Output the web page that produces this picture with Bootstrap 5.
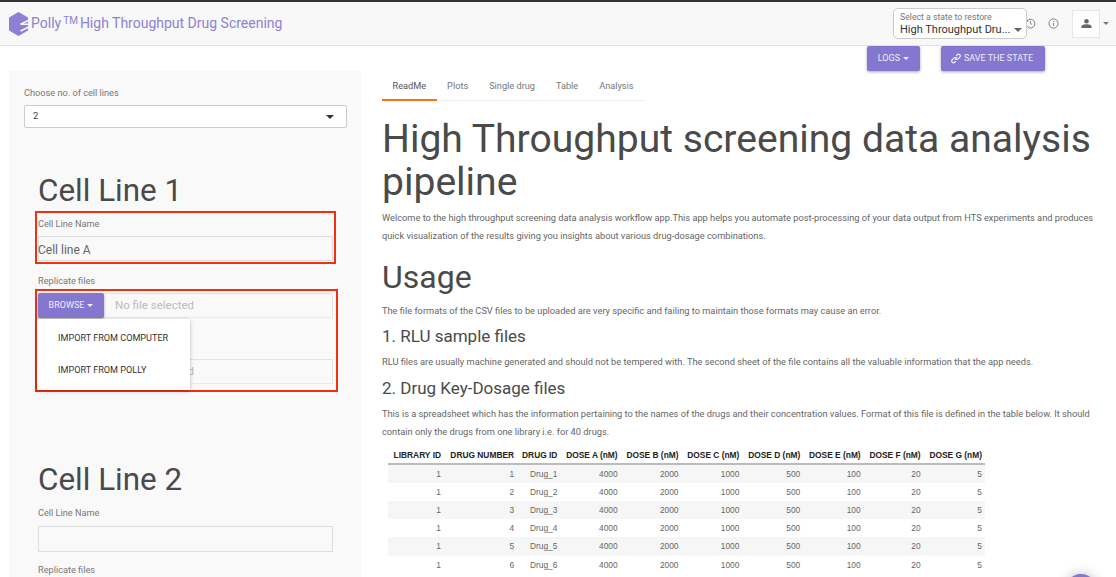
<!DOCTYPE html>
<html lang="en">
<head>
    <meta charset="UTF-8">
    <meta name="viewport" content="width=device-width, initial-scale=1.0">
    <title>Polly High Throughput Drug Screening</title>
    <link href="https://cdn.jsdelivr.net/npm/bootstrap@5.3.0/dist/css/bootstrap.min.css" rel="stylesheet">
    <style>
html, body {
    height: 577px;
    overflow: hidden;
}
body {
    font-family: Roboto, "Liberation Sans", sans-serif;
    font-size: 9.25px;
    color: #666;
    background: #fff;
}

/* Top bar */
.top-bar {
    height: 46px;
    padding: 0 7px 0 9px;
    background: #f8f8f8;
    border-top: 2px solid #333;
    border-bottom: 1px solid #e3e3e3;
    flex-wrap: nowrap;
}
.app-title {
    color: #8d81d6;
    font-size: 14px;
    margin-left: 3px;
}
.app-title sup {
    font-size: 10px;
    top: -.4em;
    margin: 0 2px 0 2px;
}
.state-box {
    width: 134px;
    height: 31px;
    padding: 3px 6px;
    margin-right: -2px;
    background: #fff;
    border: 1px solid #ccc;
    border-radius: 5px;
    position: relative;
}
.state-label {
    font-size: 8.7px;
    line-height: 10px;
    color: #777;
}
.state-value {
    font-size: 11px;
    line-height: 15px;
    color: #333;
    white-space: nowrap;
}
.state-caret {
    position: absolute;
    right: 4px;
    top: 19px;
    border-top: 4px solid #666;
    border-left: 4px solid transparent;
    border-right: 4px solid transparent;
}
.info-icon {
    margin-left: 12px;
}
.user-box {
    width: 28px;
    height: 28px;
    margin-left: 13px;
    background: #fff;
    border: 1px solid #e6e6e6;
}
.user-caret {
    margin-left: 3px;
    border-top: 3px solid #777;
    border-left: 3px solid transparent;
    border-right: 3px solid transparent;
}

/* Buttons */
.btn-polly {
    height: 25px;
    padding: 0 11px;
    font-size: 9px;
    color: #efecfb;
    background: #8577cf;
    border: 0;
    border-radius: 2px;
    box-shadow: 0 1px 3px rgba(0, 0, 0, .35);
}
.btn-polly:hover {
    color: #fff;
    background: #7a6cc6;
}
.dropdown-toggle::after {
    margin-left: 3px;
    vertical-align: 1px;
    border-top-width: 3.5px;
    border-left-width: 3.5px;
    border-right-width: 3.5px;
}
.action-row {
    height: 25px;
    padding-right: 71px;
    gap: 21px;
}
.btn-save {
    width: 104px;
    padding: 0 0 0 10px;
    gap: 3px;
}

/* Side panel */
.page-body {
    height: 506px;
}
.side-panel {
    width: 352px;
    margin-left: 9px;
    padding: 16px 14px 0 15px;
    background: #f9f9f9;
    overflow: hidden;
    flex: none;
}
.field-label {
    display: block;
    font-size: 9.2px;
    line-height: 12px;
    color: #777;
}
.count-select {
    height: 23px;
    margin-top: 6px;
    padding: 0 8px;
    font-size: 9.5px;
    color: #444;
    background: #fff;
    border: 1px solid #ccc;
    border-radius: 2px;
}
.count-caret {
    border-top: 4px solid #333;
    border-left: 4px solid transparent;
    border-right: 4px solid transparent;
}
.line-block {
    padding-left: 14px;
    padding-right: 14px;
}
.line-title {
    font-size: 31.4px;
    font-weight: 400;
    line-height: 38px;
    margin: 44px 0 1px;
    color: #4a4a4a;
}
.line-second {
    margin: 69px 0 8px;
}
.text-box {
    height: 25px;
    background: #f9f9f9;
    border: 1.5px solid #ddd;
    border-radius: 0;
    font-size: 12px;
    color: #666;
    padding: 0;
    line-height: 26px;
    text-indent: -1px;
}
.text-box-tall {
    height: 26px;
    margin-top: 7px;
}
.red-one {
    margin: 0 -3px;
    padding: 5px 1px 0;
    height: 53px;
    border: 2px solid #f03013;
}
.red-one .text-box {
    margin-top: 6px;
}
.replicate-label {
    margin: 11px 0 0;
}
.replicate-label-low {
    margin-top: 12px;
}
.red-two {
    margin: 2px -5px 0 -3px;
    padding: 2px 3px 0 1px;
    height: 103px;
    border: 2px solid #f03013;
    position: relative;
}
.file-row {
    height: 25px;
}
.btn-browse {
    width: 66px;
    flex: none;
    height: 25px;
    padding: 1px 0 0;
}
.file-name {
    flex: 1;
    height: 25px;
    padding-left: 11px;
    font-size: 11.5px;
    line-height: 23px;
    color: #bbb;
    border: 1.5px solid #e3e3e3;
    border-left: 0;
    border-bottom: 1px dotted #ddd;
}
.second-file {
    margin-top: 41px;
}
.import-menu {
    display: block;
    left: 0;
    top: 28px;
    width: 153px;
    min-width: 0;
    height: 71px;
    padding: 3px 0 0;
    border: 0;
    border-radius: 0;
    background: #fff;
    box-shadow: 0 1px 4px rgba(0, 0, 0, .25);
}
.import-menu .dropdown-item {
    height: 32px;
    padding: 0 0 0 21px;
    line-height: 32px;
    font-size: 9.1px;
    color: #333;
}

/* Main column */
.main-col {
    flex: 1;
    padding: 7px 18px 0 21px;
    min-width: 0;
    overflow: hidden;
}
.tab-strip {
    width: 262px;
    height: 23px;
    border-bottom: 1px solid #eee;
    flex-wrap: nowrap;
}
.tab-strip .nav-link {
    height: 23px;
    padding: 1px 10.5px 0;
    font-size: 9.2px;
    color: #777;
    white-space: nowrap;
    border-bottom: 2px solid transparent;
}
.tab-strip .nav-link.active {
    color: #555;
    border-bottom-color: #f57313;
}
.doc-title {
    font-size: 39.1px;
    line-height: 43px;
    font-weight: 400;
    color: #4a4a4a;
    margin: 17px 0 5px;
}
.doc-text {
    font-size: 9.25px;
    line-height: 18px;
    margin: 0;
    color: #666;
}
.doc-usage {
    font-size: 32px;
    line-height: 36px;
    font-weight: 400;
    color: #4a4a4a;
    margin: 14px 0 7px;
}
.doc-sub {
    font-size: 17px;
    line-height: 20px;
    font-weight: 400;
    color: #4a4a4a;
    margin: 6px 0 7px;
}
.doc-sub-last {
    margin: 7px 0 7px;
}
.doc-last {
    line-height: 17.500px;
}

/* Key table */
.key-table {
    width: 597px;
    margin: 7.500px 0 0 6px;
    font-family: "Liberation Sans", Arial, sans-serif;
    font-size: 8.4px;
    --bs-table-striped-bg: #f6f6f6;
    --bs-table-striped-color: #666;
}
.key-table th,
.key-table td {
    padding: 0 3px;
    height: 18.3px;
    line-height: 18px;
    text-align: right;
    white-space: nowrap;
    border: 0;
    color: #666;
}
.key-table th {
    height: 16px;
    line-height: 15px;
    color: #222;
    border-bottom: 2px solid #bbb;
}
.fab-peek {
    position: absolute;
    left: 1065px;
    top: 574px;
    width: 32px;
    height: 32px;
    border-radius: 50%;
    background: #8577cf;
    box-shadow: 0 0 12px rgba(0, 0, 0, .25);
}
    </style>
</head>
<body>
<nav class="navbar top-bar d-flex align-items-center">
    <div class="d-flex align-items-center flex-grow-1">
        <svg width="19" height="24" viewBox="0 0 19 24">
            <path fill="#8d81d6" stroke="#8d81d6" stroke-width="2" stroke-linejoin="round" d="M9.500 1 18 6v12l-8.500 5L1 18V6z"/>
            <path fill="none" stroke="#f8f8f8" stroke-width="1.600" d="M20 8.200 11.500 12.200H20M20 15 11.500 19"/>
        </svg>
        <span class="app-title">Polly<sup>TM</sup>High Throughput Drug Screening</span>
    </div>
    <div class="state-box">
        <div class="state-label">Select a state to restore</div>
        <div class="state-value">High Throughput Dru...</div>
        <span class="state-caret"></span>
    </div>
    <svg width="11" height="11" viewBox="0 0 12 12" fill="none" stroke="#777" stroke-width="1">
        <path d="M2.200 3.200A4.800 4.800 0 1 1 1.200 6"/>
        <path d="M1.800 1.400v2h2M6 3.400V6l1.800 1.200"/>
    </svg>
    <svg class="info-icon" width="11" height="11" viewBox="0 0 12 12" fill="none" stroke="#777" stroke-width="1">
        <circle cx="6" cy="6" r="5"/>
        <path d="M6 5.400v3.200M6 3.200v1.100"/>
    </svg>
    <div class="user-box d-flex align-items-center justify-content-center">
        <svg width="11" height="9" viewBox="0 0 11 9">
            <circle cx="5.500" cy="2.300" r="2.300" fill="#666"/>
            <path fill="#666" d="M.5 9V7.500C.5 6 3.500 5.300 5.500 5.300s5 .7 5 2.200V9z"/>
        </svg>
    </div>
    <span class="user-caret"></span>
</nav>

<div class="action-row d-flex justify-content-end">
    <button class="btn btn-polly dropdown-toggle" type="button">LOGS</button>
    <button class="btn btn-polly btn-save d-flex align-items-center" type="button">
        <svg width="10" height="11" viewBox="0 0 12 12" fill="none" stroke="#efecfb" stroke-width="1.300" stroke-linecap="round">
            <path d="M5 7 7 5M6.500 2.500l1-1a2.100 2.100 0 0 1 3 3l-2 2a2.100 2.100 0 0 1-2.500.3"/>
            <path d="M5.500 9.500l-1 1a2.100 2.100 0 0 1-3-3l2-2A2.100 2.100 0 0 1 6 5.200"/>
        </svg>
        SAVE THE STATE
    </button>
</div>

<div class="page-body d-flex">
    <aside class="side-panel">
        <label class="field-label">Choose no. of cell lines</label>
        <div class="count-select d-flex align-items-center justify-content-between">
            <span>2</span><span class="count-caret me-1"></span>
        </div>

        <div class="line-block">
            <h1 class="line-title">Cell Line 1</h1>
            <div class="red-one">
                <label class="field-label">Cell Line Name</label>
                <div class="text-box">Cell line A</div>
            </div>
            <label class="field-label replicate-label">Replicate files</label>
            <div class="red-two">
                <div class="file-row d-flex">
                    <button class="btn btn-polly btn-browse dropdown-toggle" type="button">BROWSE</button>
                    <div class="file-name">No file selected</div>
                </div>
                <div class="file-row d-flex second-file">
                    <button class="btn btn-polly btn-browse dropdown-toggle" type="button">BROWSE</button>
                    <div class="file-name">No file selected</div>
                </div>
                <ul class="dropdown-menu import-menu">
                    <li><a class="dropdown-item" href="#">IMPORT FROM COMPUTER</a></li>
                    <li><a class="dropdown-item" href="#">IMPORT FROM POLLY</a></li>
                </ul>
            </div>

            <h1 class="line-title line-second">Cell Line 2</h1>
            <label class="field-label">Cell Line Name</label>
            <div class="text-box text-box-tall"></div>
            <label class="field-label replicate-label-low">Replicate files</label>
        </div>
    </aside>

    <main class="main-col">
        <ul class="nav tab-strip">
            <li class="nav-item"><a class="nav-link active" href="#">ReadMe</a></li>
            <li class="nav-item"><a class="nav-link" href="#">Plots</a></li>
            <li class="nav-item"><a class="nav-link" href="#">Single drug</a></li>
            <li class="nav-item"><a class="nav-link" href="#">Table</a></li>
            <li class="nav-item"><a class="nav-link" href="#">Analysis</a></li>
        </ul>
        <h1 class="doc-title">High Throughput screening data analysis pipeline</h1>
        <p class="doc-text">Welcome to the high throughput screening data analysis workflow app.This app helps you automate post-processing of your data output from HTS experiments and produces quick visualization of the results giving you insights about various drug-dosage combinations.</p>
        <h2 class="doc-usage">Usage</h2>
        <p class="doc-text">The file formats of the CSV files to be uploaded are very specific and failing to maintain those formats may cause an error.</p>
        <h3 class="doc-sub">1. RLU sample files</h3>
        <p class="doc-text">RLU files are usually machine generated and should not be tempered with. The second sheet of the file contains all the valuable information that the app needs.</p>
        <h3 class="doc-sub doc-sub-last">2. Drug Key-Dosage files</h3>
        <p class="doc-text doc-last">This is a spreadsheet which has the information pertaining to the names of the drugs and their concentration values. Format of this file is defined in the table below. It should contain only the drugs from one library i.e. for 40 drugs.</p>
        <table class="table table-striped key-table">
            <thead>
                <tr>
                    <th>LIBRARY ID</th><th>DRUG NUMBER</th><th>DRUG ID</th><th>DOSE A (nM)</th><th>DOSE B (nM)</th><th>DOSE C (nM)</th><th>DOSE D (nM)</th><th>DOSE E (nM)</th><th>DOSE F (nM)</th><th>DOSE G (nM)</th>
                </tr>
            </thead>
            <tbody>
                <tr><td>1</td><td>1</td><td>Drug_1</td><td>4000</td><td>2000</td><td>1000</td><td>500</td><td>100</td><td>20</td><td>5</td></tr>
                <tr><td>1</td><td>2</td><td>Drug_2</td><td>4000</td><td>2000</td><td>1000</td><td>500</td><td>100</td><td>20</td><td>5</td></tr>
                <tr><td>1</td><td>3</td><td>Drug_3</td><td>4000</td><td>2000</td><td>1000</td><td>500</td><td>100</td><td>20</td><td>5</td></tr>
                <tr><td>1</td><td>4</td><td>Drug_4</td><td>4000</td><td>2000</td><td>1000</td><td>500</td><td>100</td><td>20</td><td>5</td></tr>
                <tr><td>1</td><td>5</td><td>Drug_5</td><td>4000</td><td>2000</td><td>1000</td><td>500</td><td>100</td><td>20</td><td>5</td></tr>
                <tr><td>1</td><td>6</td><td>Drug_6</td><td>4000</td><td>2000</td><td>1000</td><td>500</td><td>100</td><td>20</td><td>5</td></tr>
            </tbody>
        </table>
    </main>
</div>
<div class="fab-peek"></div>

<script src="https://cdn.jsdelivr.net/npm/bootstrap@5.3.0/dist/js/bootstrap.bundle.min.js"></script>
</body>
</html>
